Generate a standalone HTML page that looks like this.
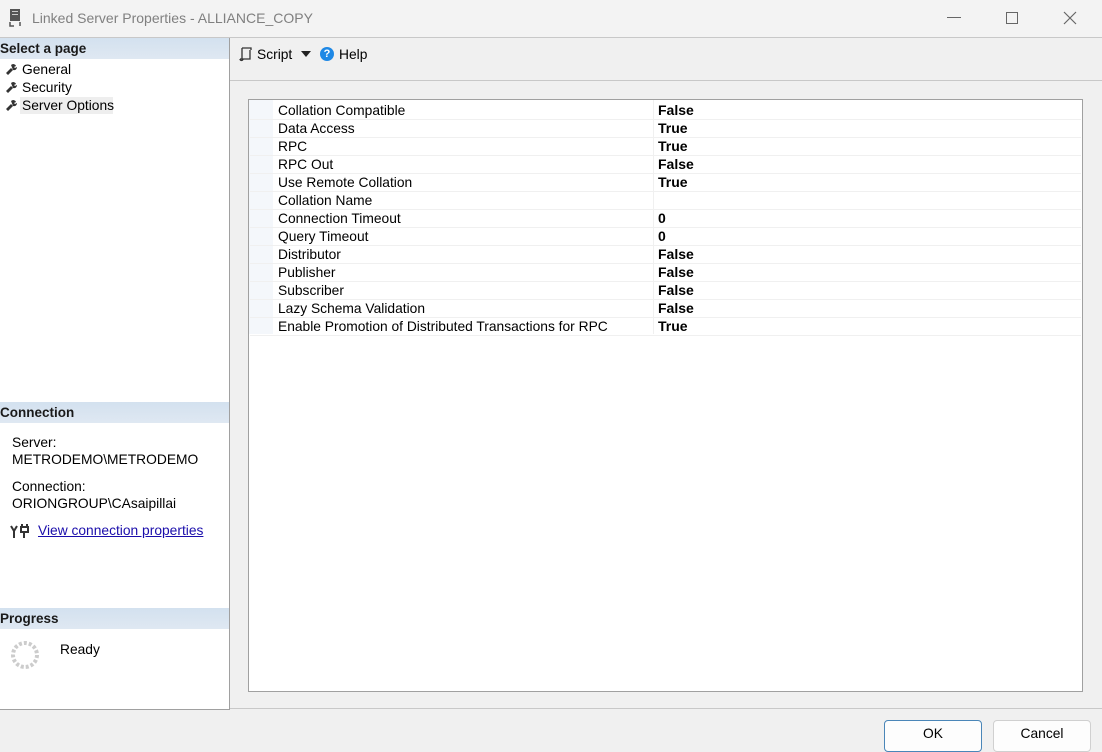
<!DOCTYPE html>
<html><head><style>
body{margin:0;width:1102px;height:745px;background:#f0f0f0;font-family:"Liberation Sans",sans-serif;font-size:13.8px;color:#000;position:relative;overflow:hidden}
.a{position:absolute}
.hdr{position:absolute;left:0;width:229px;height:21px;background:linear-gradient(#d3e1ef,#dfe8f2);font-weight:bold;font-size:13.5px;line-height:21px;color:#1a1a1a}
.nav{position:absolute;left:22px}
.row{position:absolute;left:250px;width:831px;height:18px;border-bottom:1px solid #f0f0f0}
.row .k{position:absolute;left:28px;top:2px}
.row .v{position:absolute;left:408px;top:1px;font-weight:bold;font-size:14px}
</style></head><body>
<div class="a" style="left:0;top:0;width:1102px;height:37px;background:#f3f3f3;border-bottom:1px solid #c8c8c8"></div>
<svg class="a" style="left:8px;top:9px" width="14" height="18"><rect x="2" y="0" width="10" height="12" fill="#555"/><rect x="4" y="2" width="6" height="1" fill="#ccc"/><rect x="4" y="5" width="6" height="1" fill="#ccc"/><path d="M2 13v4h4M12 13v4" stroke="#555" stroke-width="1.5" fill="none"/></svg>
<div class="a" style="left:32px;top:10px;font-size:14px;color:#808080">Linked Server Properties - ALLIANCE_COPY</div>
<div class="a" style="left:947px;top:17px;width:14px;height:1px;background:#666"></div>
<div class="a" style="left:1006px;top:12px;width:10px;height:10px;border:1px solid #666"></div>
<svg class="a" style="left:1063px;top:11px" width="14" height="14"><path d="M1 1L13 13M13 1L1 13" stroke="#666" stroke-width="1.2"/></svg>
<div class="a" style="left:0;top:38px;width:229px;height:671px;background:#fff;border-right:1px solid #a0a0a0;border-bottom:1px solid #a0a0a0"></div>
<div class="hdr" style="top:38px">Select a page</div>
<div class="nav" style="top:62px">General</div>
<div class="nav" style="top:80px">Security</div>
<div class="a" style="left:20px;top:97px;width:93px;height:17px;background:#eee"></div>
<div class="nav" style="top:98px">Server Options</div>
<svg class="a" style="left:4px;top:62px" width="14" height="50"><g fill="#333"><path d="M2 11l5-5 2 2-5 5zM7 3a3 3 0 0 1 5 1l-2 1 1 1 2-1a3 3 0 0 1-4 3z"/><path transform="translate(0,18)" d="M2 11l5-5 2 2-5 5zM7 3a3 3 0 0 1 5 1l-2 1 1 1 2-1a3 3 0 0 1-4 3z"/><path transform="translate(0,36)" d="M2 11l5-5 2 2-5 5zM7 3a3 3 0 0 1 5 1l-2 1 1 1 2-1a3 3 0 0 1-4 3z"/></g></svg>
<div class="hdr" style="top:402px">Connection</div>
<div class="a" style="left:12px;top:435px">Server:</div>
<div class="a" style="left:12px;top:452px">METRODEMO\METRODEMO</div>
<div class="a" style="left:12px;top:479px">Connection:</div>
<div class="a" style="left:12px;top:496px">ORIONGROUP\CAsaipillai</div>
<svg class="a" style="left:10px;top:523px" width="20" height="16"><path d="M1 3l3 5M7 3L4 8M4 8v7M10 4h9M12 1v3M17 1v3M11 4v5h7V4M14 9v6" stroke="#333" stroke-width="2" fill="none"/></svg>
<div class="a" style="left:38px;top:523px;color:#1a0dab;text-decoration:underline">View connection properties</div>
<div class="hdr" style="top:608px">Progress</div>
<svg class="a" style="left:10px;top:640px" width="30" height="30"><circle cx="15" cy="15" r="12" fill="none" stroke="#ccc" stroke-width="4" stroke-dasharray="3 2"/></svg>
<div class="a" style="left:60px;top:642px">Ready</div>
<div class="a" style="left:230px;top:80px;width:872px;height:1px;background:#c8c8c8"></div>
<svg class="a" style="left:239px;top:46px" width="14" height="16"><path d="M3 2h9v2M3 2v11M3 13h-2M3 13h8V4M1 13a1.5 1.5 0 0 0 3 0" stroke="#333" stroke-width="1.3" fill="none"/></svg>
<div class="a" style="left:257px;top:47px">Script</div>
<svg class="a" style="left:301px;top:51px" width="10" height="6"><path d="M0 0h10L5 6z" fill="#222"/></svg>
<div class="a" style="left:320px;top:47px;width:14px;height:14px;border-radius:50%;background:#1e88e5;color:#fff;font-size:11px;font-weight:bold;text-align:center;line-height:14px">?</div>
<div class="a" style="left:339px;top:47px">Help</div>
<div class="a" style="left:248px;top:99px;width:833px;height:591px;background:#fff;border:1px solid #a0a0a0"></div>
<div class="a" style="left:249px;top:100px;width:24px;height:234px;background:#f4f7fb"></div>
<div class="a" style="left:653px;top:100px;width:1px;height:234px;background:#f0f0f0"></div>
<div class="row" style="top:101px"><span class="k">Collation Compatible</span><span class="v">False</span></div>
<div class="row" style="top:119px"><span class="k">Data Access</span><span class="v">True</span></div>
<div class="row" style="top:137px"><span class="k">RPC</span><span class="v">True</span></div>
<div class="row" style="top:155px"><span class="k">RPC Out</span><span class="v">False</span></div>
<div class="row" style="top:173px"><span class="k">Use Remote Collation</span><span class="v">True</span></div>
<div class="row" style="top:191px"><span class="k">Collation Name</span><span class="v"></span></div>
<div class="row" style="top:209px"><span class="k">Connection Timeout</span><span class="v">0</span></div>
<div class="row" style="top:227px"><span class="k">Query Timeout</span><span class="v">0</span></div>
<div class="row" style="top:245px"><span class="k">Distributor</span><span class="v">False</span></div>
<div class="row" style="top:263px"><span class="k">Publisher</span><span class="v">False</span></div>
<div class="row" style="top:281px"><span class="k">Subscriber</span><span class="v">False</span></div>
<div class="row" style="top:299px"><span class="k">Lazy Schema Validation</span><span class="v">False</span></div>
<div class="row" style="top:317px"><span class="k">Enable Promotion of Distributed Transactions for RPC</span><span class="v">True</span></div>
<div class="a" style="left:230px;top:708px;width:872px;height:1px;background:#c8c8c8"></div>
<div class="a" style="left:884px;top:720px;width:96px;height:30px;background:#fdfdfd;border:1px solid #4a86b8;border-radius:4px;text-align:center;line-height:26px">OK</div>
<div class="a" style="left:993px;top:720px;width:96px;height:30px;background:#fdfdfd;border:1px solid #d0d0d0;border-radius:4px;text-align:center;line-height:26px">Cancel</div>
</body></html>
